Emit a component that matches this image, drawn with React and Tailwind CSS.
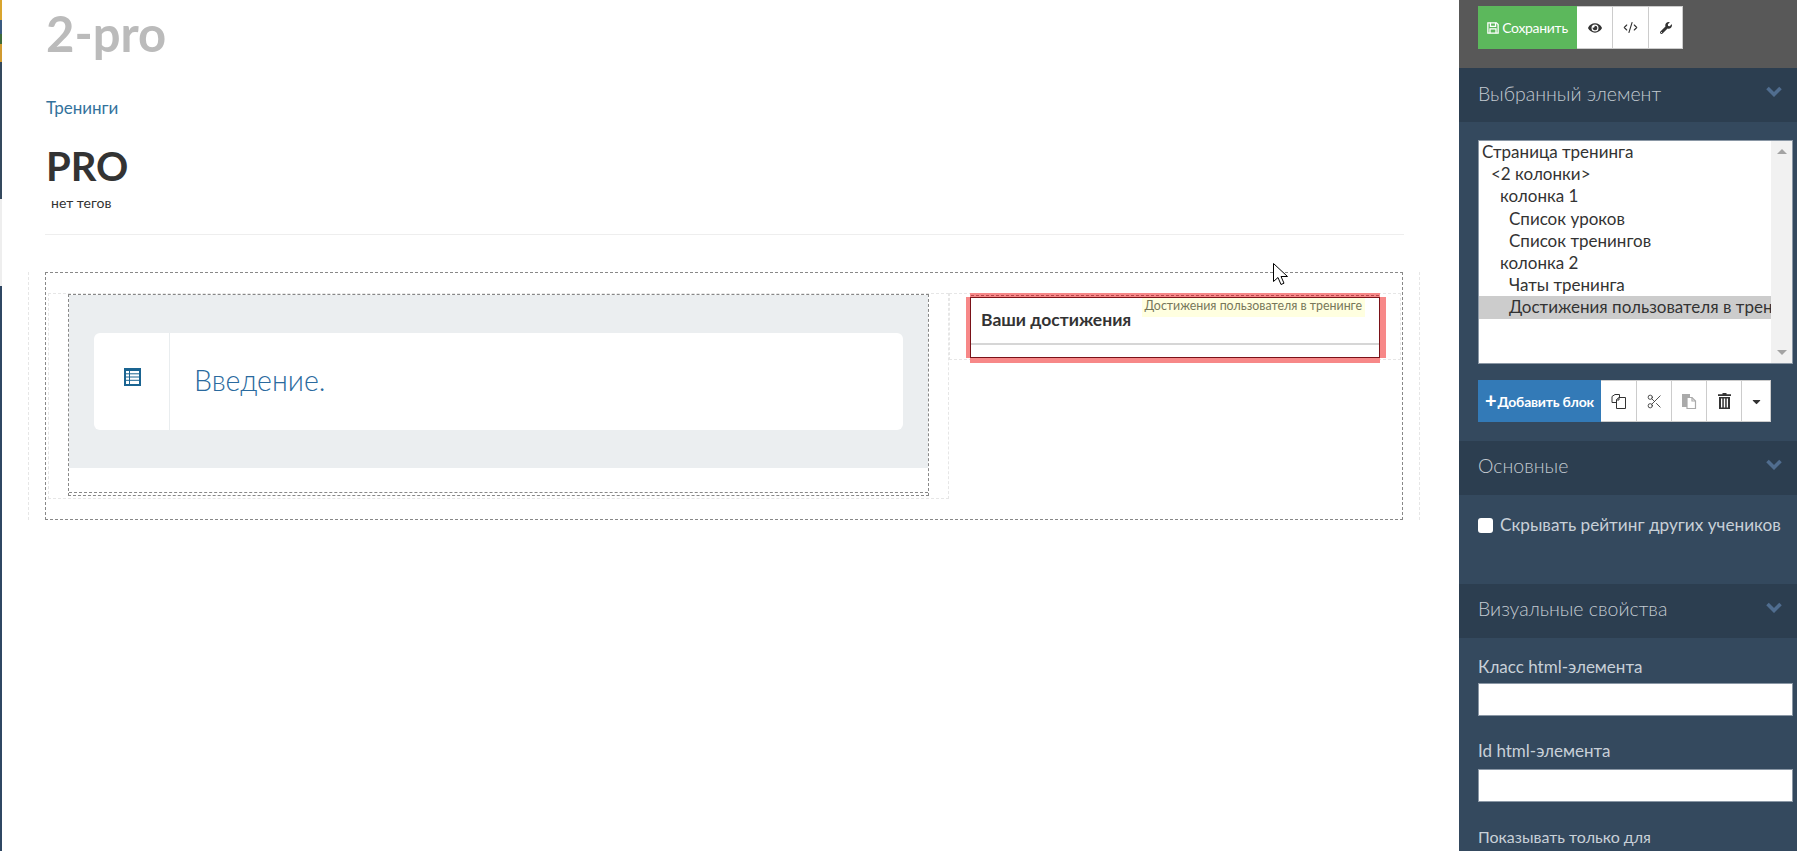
import React from "react";
import { FaEye, FaWrench, FaCaretDown } from "react-icons/fa";
import { LuCodeXml, LuScissors } from "react-icons/lu";

const font = "font-['Lato','Open_Sans','Noto_Sans',sans-serif]";

function SaveIcon() {
  return (
    <svg width="12" height="12" viewBox="0 0 14 14" fill="none" stroke="currentColor" strokeWidth="1.5">
      <path d="M1 1h10l2 2v10H1z" />
      <path d="M4 1v4h6V1M3.500 13V8h7v5" />
    </svg>
  );
}

function CopyIcon() {
  return (
    <svg width="15" height="15" viewBox="0 0 15 15" fill="#fff" stroke="#333" strokeWidth="1">
      <path d="M1 2.500 4 .5h4.500v8H1z" />
      <path d="M5.500 5.500 8 3.500h6.500v11h-9z" />
      <path d="M8 3.500v2.500H5.500" fill="none" />
    </svg>
  );
}

function PasteIcon() {
  return (
    <svg width="16" height="16" viewBox="0 0 16 16">
      <path d="M1 1h8v13H1z" fill="#aaa" />
      <path d="M6 4.500h5l3.500 3.500v7.500H6z" fill="#fff" stroke="#aaa" strokeWidth="1.2" />
      <path d="M11 4.500V8h3.500" fill="none" stroke="#aaa" strokeWidth="1.2" />
    </svg>
  );
}

function TrashIcon() {
  return (
    <svg width="13" height="16" viewBox="0 0 13 16" fill="#333">
      <path d="M4.500 0h4v1.200H13v1.800H0V1.200h4.500z" />
      <path d="M1 4h11v12H1zM3 5.500v9h1.300v-9zM5.800 5.500v9h1.400v-9zM8.700 5.500v9H10v-9z" fillRule="evenodd" />
    </svg>
  );
}

function ListIcon() {
  return (
    <svg width="17" height="18" viewBox="0 0 17 18">
      <rect width="17" height="18" fill="#1a6491" />
      <rect x="2" y="3" width="13" height="13" fill="#fff" />
      <path d="M2 5.800h13M2 9h13M2 12.300h13M5.500 3v13" stroke="#1a6491" strokeWidth="1" />
    </svg>
  );
}

function Chevron() {
  return (
    <svg width="16" height="11" viewBox="0 0 16 11" fill="none" stroke="#506d8f" strokeWidth="3.600" className="-mt-[7px]">
      <path d="M1.500 2 8 8.500 14.500 2" />
    </svg>
  );
}

function SectionHeader({ title, lift = "-mt-[2px]" }) {
  return (
    <div className="h-[54px] bg-[#2c3e50] pl-[19px] pr-[15px] flex items-center justify-between">
      <span className={`text-[19.5px] leading-[24px] ${lift} text-[#c3cad0] font-light`}>{title}</span>
      <Chevron />
    </div>
  );
}

function IconButton({ children, w = "w-[35px]" }) {
  return (
    <button className={`${w} bg-white border-l border-[#ccc] first:border-l-0 flex items-center justify-center text-[#333]`}>
      {children}
    </button>
  );
}

const tree = [
  ["Страница тренинга", "pl-[3px]"],
  ["<2 колонки>", "pl-[12px]"],
  ["колонка 1", "pl-[21px]"],
  ["Список уроков", "pl-[30px]"],
  ["Список тренингов", "pl-[30px]"],
  ["колонка 2", "pl-[21px]"],
  ["Чаты тренинга", "pl-[30px]"],
  ["Достижения пользователя в тренинге", "pl-[30px] bg-[#cccccc]"],
];

function Sidebar() {
  return (
    <aside className="w-[338px] shrink-0 bg-[#34495e] h-[851px] overflow-hidden">
      <div className="h-[68px] bg-[#585858] pl-[19px] pt-[6px]">
        <div className="flex h-[43px]">
          <button className="w-[99px] bg-[#5cb85c] text-white text-[14px] flex items-center justify-center gap-[3px] tracking-[-0.3px]">
            <SaveIcon /> Сохранить
          </button>
          <div className="flex border border-l-0 border-[#ccc]">
            <IconButton w="w-[35px]"><FaEye className="text-[14px]" /></IconButton>
            <IconButton w="w-[36px]"><LuCodeXml className="text-[15px]" strokeWidth={1.7} /></IconButton>
            <IconButton w="w-[34px]"><FaWrench className="text-[12px]" /></IconButton>
          </div>
        </div>
      </div>

      <SectionHeader title="Выбранный элемент" />
      <div className="pl-[19px] pr-[4px] pt-[18px] pb-[19px]">
        <div className="h-[224px] bg-white border border-[#8a97a5] flex text-[17px] leading-[22.2px] text-[#333]">
          <div className="flex-1 min-w-0 overflow-hidden">
            {tree.map(([t, c]) => (
              <div key={t} className={`${c} whitespace-nowrap overflow-hidden h-[22.2px]`}>{t}</div>
            ))}
          </div>
          <div className="w-[21px] bg-[#f1f1f1] flex flex-col items-center justify-between py-[8px]">
            <div className="w-0 h-0 border-x-[5px] border-x-transparent border-b-[5px] border-b-[#a3a3a3]" />
            <div className="w-0 h-0 border-x-[5px] border-x-transparent border-t-[5px] border-t-[#a3a3a3]" />
          </div>
        </div>
        <div className="flex h-[42px] mt-[16px]">
          <button className="w-[123px] bg-[#337ab7] text-white text-[14px] font-bold tracking-[-0.2px] flex items-center justify-center gap-[1px]">
            <span className="text-[20px] leading-[20px] font-black -mt-[2px]">+</span>Добавить блок
          </button>
          <div className="flex border border-l-0 border-[#ccc]">
            <IconButton><CopyIcon /></IconButton>
            <IconButton><LuScissors className="text-[17px]" strokeWidth={1.2} /></IconButton>
            <IconButton><PasteIcon /></IconButton>
            <IconButton><TrashIcon /></IconButton>
            <IconButton w="w-[29px]"><FaCaretDown className="text-[13px]" /></IconButton>
          </div>
        </div>
      </div>

      <SectionHeader title="Основные" lift="-mt-[4px]" />
      <div className="pl-[19px] h-[89px] pt-[19px]">
        <label className="flex items-center gap-[7px] text-[17.2px] text-[#c8d0d8] h-[22px]">
          <input type="checkbox" className="w-[15px] h-[15px] appearance-none bg-white rounded-[3px]" />
          <span className="whitespace-nowrap">Скрывать рейтинг других учеников</span>
        </label>
      </div>

      <SectionHeader title="Визуальные свойства" lift="-mt-[4px]" />
      <div className="pl-[19px] pr-[4px] pt-[20px] text-[#c8d0d8]">
        <div className="text-[17px] leading-[18px] h-[25px]">Класс html-элемента</div>
        <input className="block w-full h-[33px] bg-white border border-[#8a97a5]" />
        <div className="text-[17px] leading-[16px] h-[26px] mt-[27px]">Id html-элемента</div>
        <input className="block w-full h-[33px] bg-white border border-[#8a97a5]" />
        <div className="text-[16px] leading-[20px] mt-[25px]">Показывать только для</div>
      </div>
    </aside>
  );
}

function Content() {
  return (
    <main className="flex-1 min-w-0 pt-[4px]">
      <div className="pl-[44px] text-[49px] leading-[58px] font-bold text-[#bbbbbb]">2-pro</div>
      <div className="pl-[44px] mt-[36px] text-[17px] leading-[20px] text-[#33729c]">Тренинги</div>
      <div className="pl-[44px] mt-[25px] text-[40px] leading-[46px] font-bold text-[#333333]">PRO</div>
      <div className="pl-[49px] mt-[5px] text-[14px] leading-[18px] text-[#333]">нет тегов</div>
      <div className="ml-[43px] w-[1359px] border-t border-[#eeeeee] mt-[22px]" />

      <div className="ml-[26px] w-[1392px] mt-[37px] px-[16px] border-x border-dashed border-[#e6e6e6]">
        <div className="h-[248px] border border-dashed border-[#888888] pt-[20px]">
          <div className="flex ml-[2px] items-start">
            <div className="w-[901px] h-[206px] border border-dashed border-[#e6e6e6] pl-[19px] pr-[19px]">
              <div className="h-[202px] border border-dashed border-[#888888]">
                <div className="h-[173px] bg-[#ebeef0] px-[25px] pt-[38px]">
                  <div className="h-[97px] bg-white rounded-[6px] flex">
                    <div className="w-[76px] border-r border-[#e9edef] flex justify-center pt-[35px] pl-[2px]">
                      <ListIcon />
                    </div>
                    <div className="pl-[24px] flex items-center text-[28.5px] font-light text-[#2a6a9e] pb-[2px]">Введение.</div>
                  </div>
                </div>
                <div className="h-[25px] border-b border-dashed border-[#888888]" />
              </div>
            </div>
            <div className="w-[452px] h-[67px] border border-dashed border-[#e6e6e6] pl-[20px] pr-[20px] pt-[3px]">
              <div className="relative h-[61px] bg-white border border-[#7a1218] shadow-[-4px_0_0_#f78888,6px_0_0_#f78888,0_-4px_0_#f78888,0_5px_0_#f78888]">
                <div className="absolute left-0 right-0 -top-[3px] border-t border-dashed border-[#b84a50]" />
                <div className="absolute right-[14px] top-0 h-[19px] px-[3px] bg-[#ffffe0] text-[12.4px] leading-[16px] text-[#77775a] whitespace-nowrap">
                  Достижения пользователя в тренинге
                </div>
                <div className="pl-[10px] pt-[11px] text-[17.5px] leading-[22px] font-bold text-[#333]">Ваши достижения</div>
                <div className="mt-[12px] h-[2px] bg-[#d6d6d6]" />
              </div>
            </div>
          </div>
        </div>
      </div>
    </main>
  );
}

export default function App() {
  return (
    <div className={`${font} relative flex w-[1797px] h-[851px] overflow-hidden bg-white`}>
      <div className="w-[2px] shrink-0 flex flex-col">
        <div className="h-[20px] bg-[#d9a52e]" />
        <div className="h-[14px] bg-[#3a5a80]" />
        <div className="h-[10px] bg-[#3e6b3a]" />
        <div className="h-[18px] bg-[#d09a30]" />
        <div className="h-[137px] bg-[#34495e]" />
        <div className="h-[87px] bg-[#eeeeee]" />
        <div className="flex-1 bg-[#2f4763]" />
      </div>
      <Content />
      <Sidebar />
      <svg className="absolute left-[1273px] top-[263px]" width="16" height="23" viewBox="0 0 16 23">
        <path d="M0.500 0.500v18l4.500-4 3 7 3-1.300-3-6.700h6.500z" fill="#fff" stroke="#000" strokeWidth="1" />
      </svg>
    </div>
  );
}
